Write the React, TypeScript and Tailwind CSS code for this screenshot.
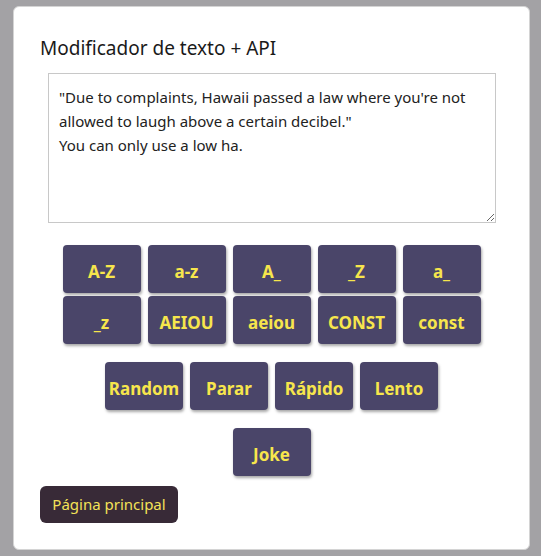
import { useState } from "react";

const rowOne = ["A-Z", "a-z", "A_", "_Z", "a_"];
const rowTwo = ["_z", "AEIOU", "aeiou", "CONST", "const"];
const rowThree = ["Random", "Parar", "Rápido", "Lento"];

const ToolButton = ({ label }: { label: string }) => (
  <button className="w-[78px] h-[48px] pt-[6px] rounded-[4px] bg-[#4a4569] text-[#f7e64c] text-[17px] font-bold shadow-[1px_2px_3px_rgba(0,0,0,0.35)] flex items-center justify-center whitespace-nowrap">
    {label}
  </button>
);

const App = () => {
  const [text, setText] = useState(
    "\"Due to complaints, Hawaii passed a law where you're not allowed to laugh above a certain decibel.\"\nYou can only use a low ha."
  );

  return (
    <div
      className="min-h-[556px] bg-[#a3a2a5] pl-[13px] pr-[11px] pt-[6px] pb-[6px]"
      style={{ fontFamily: '"Noto Sans", "Open Sans", sans-serif' }}
    >
      <div className="bg-white rounded-[6px] border border-[#d4d4d4] h-[544px] pl-[26px] pr-[26px] pt-[28px]">
        <h1 className="text-[19px] text-[#1a1a1a] leading-[26px]">Modificador de texto + API</h1>
        <div className="pl-[8px] pr-[7px] mt-[12px]">
          <textarea
            value={text}
            onChange={(e) => setText(e.target.value)}
            className="block w-full h-[150px] border border-[#c8c8c8] pl-[10px] pr-[6px] pt-[11px] text-[15px] leading-[24px] text-[#222] outline-none resize-y"
          />
        </div>
        <div className="flex flex-col items-center mt-[22px] gap-[3px]">
          <div className="flex gap-[7px]">
            {rowOne.map((l) => (
              <ToolButton key={l} label={l} />
            ))}
          </div>
          <div className="flex gap-[7px]">
            {rowTwo.map((l) => (
              <ToolButton key={l} label={l} />
            ))}
          </div>
        </div>
        <div className="flex justify-center gap-[7px] mt-[18px]">
          {rowThree.map((l) => (
            <ToolButton key={l} label={l} />
          ))}
        </div>
        <div className="flex justify-center mt-[18px]">
          <ToolButton label="Joke" />
        </div>
        <button className="mt-[10px] h-[37px] w-[138px] rounded-[6px] bg-[#382a37] text-[#f3e257] text-[15px]">
          Página principal
        </button>
      </div>
    </div>
  );
};

export default App;
